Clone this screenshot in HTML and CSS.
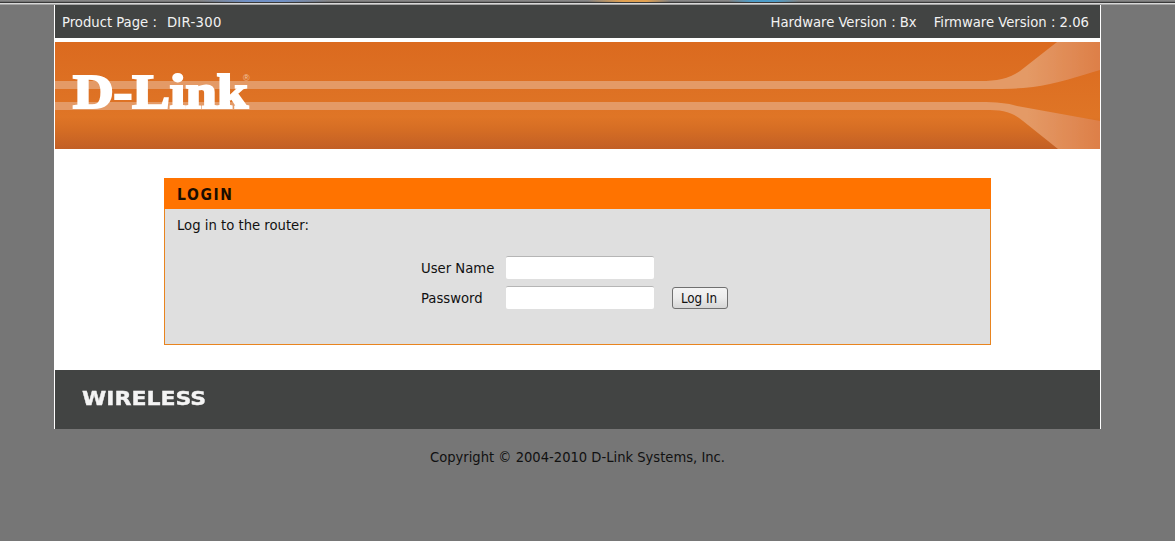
FILE: index.html
```html
<!DOCTYPE html>
<html lang="en">
<head>
<meta charset="utf-8">
<title>D-LINK SYSTEMS, INC. | WIRELESS ROUTER | LOGIN</title>
<link rel="stylesheet" href="styles.css">
</head>
<body>
<div class="strip"></div>
<div class="page">
  <header class="topbar">
    <span class="product"><span>Product Page :</span><span class="model">DIR-300</span></span>
    <span class="versions"><span>Hardware Version : Bx</span><span>Firmware Version : 2.06</span></span>
  </header>
  <div class="banner">
    <svg class="banner-art" width="1045" height="107" viewBox="0 0 1045 107" aria-hidden="true">
      <defs>
        <linearGradient id="orange" x1="0" y1="0" x2="0" y2="1">
          <stop offset="0" stop-color="#db6a1f"/>
          <stop offset="0.7" stop-color="#df7526"/>
          <stop offset="0.82" stop-color="#d56d24"/>
          <stop offset="1" stop-color="#c25f25"/>
        </linearGradient>
        <linearGradient id="wing" x1="0" y1="0" x2="1045" y2="0" gradientUnits="userSpaceOnUse">
          <stop offset="0" stop-color="#e49a66"/>
          <stop offset="0.93" stop-color="#e49a66"/>
          <stop offset="1" stop-color="#dd7f48"/>
        </linearGradient>
        <filter id="soft" x="-1%" y="-5%" width="102%" height="110%">
          <feGaussianBlur stdDeviation="0.7"/>
        </filter>
      </defs>
      <rect width="1045" height="107" fill="url(#orange)"/>
      <g filter="url(#soft)">
        <path d="M0 39H925C942 39 953 37 965 29L1002 0H1045V28C1025 34 1000 42 978 45C962 47 945 47 925 47H0Z" fill="url(#wing)"/>
        <path d="M0 60H925C942 60 952 61 962 64L1045 79V107H1003L968 79C958 71 950 68 935 68H0Z" fill="url(#wing)"/>
      </g>
      <text class="logo-text" x="18" y="66" textLength="175" lengthAdjust="spacingAndGlyphs">D-Link</text>
      <text class="logo-mark" x="188" y="39">®</text>
    </svg>
  </div>
  <main class="content">
    <section class="card">
      <h1 class="card-title">LOGIN</h1>
      <div class="card-body">
        <p class="intro">Log in to the router:</p>
        <form class="login-form">
          <label class="field-label" for="user">User Name</label>
          <input class="field" id="user" type="text">
          <span></span>
          <label class="field-label" for="pass">Password</label>
          <input class="field" id="pass" type="password">
          <button class="submit" type="button">Log In</button>
        </form>
      </div>
    </section>
  </main>
  <footer class="footer"><span class="wireless">WIRELESS</span></footer>
</div>
<p class="copyright">Copyright © 2004-2010 D-Link Systems, Inc.</p>
</body>
</html>
```
FILE: styles.css
```css
* { box-sizing: border-box; }
html, body { margin: 0; height: 100%; }
body {
  background: #767676;
  color: #111;
  font-family: "DejaVu Sans Condensed", "DejaVu Sans", sans-serif;
  font-stretch: condensed;
  font-size: 14.7px;
  overflow: hidden;
}
.strip {
  height: 5px;
  background:
    linear-gradient(90deg, transparent 17%, #6f8fc4 21%, #6f8fc4 24%, transparent 28%, transparent 50%, #e0a050 53%, #e0a050 55%, transparent 57%, transparent 62%, #4c9cc8 64%, #4c9cc8 66%, transparent 68%) 0 0 / 100% 2px no-repeat,
    linear-gradient(#8f8f8f 0, #6a6a6a 40%, #3a3a3a 50%, #d8d8d8 70%, #8a8a8a 100%);
}
.page {
  width: 1047px;
  margin-left: 54px;
  background: #fff;
  border-left: 1px solid #fff;
  border-right: 1px solid #fff;
}
.topbar {
  height: 33px;
  background: #424443;
  color: #f2f2f2;
  display: flex;
  justify-content: space-between;
  align-items: center;
  padding: 0 11px 0 7px;
}
.product { display: flex; gap: 10px; }
.model { letter-spacing: 0.3px; }
.versions { display: flex; gap: 17px; }
.banner { margin-top: 4px; height: 107px; }
.banner-art { display: block; }
.logo-text {
  font-family: "Liberation Serif", serif;
  font-weight: 700;
  font-size: 48px;
  fill: #fff;
  stroke: #fff;
  stroke-width: 2.2px;
}
.logo-mark {
  font-family: "Liberation Sans", sans-serif;
  font-size: 9px;
  fill: #f1c6a6;
}
.content { height: 221px; padding: 29px 109px 0; }
.card {
  height: 167px;
  background: #dfdfdf;
  border: 1px solid #e8841f;
  border-top: 0;
}
.card-title {
  margin: 0;
  height: 31px;
  margin-inline: -1px;
  padding: 0 13px;
  background: #ff7300;
  color: #1a0d00;
  font-size: 15.5px;
  font-weight: 700;
  letter-spacing: 1.6px;
  line-height: 34px;
}
.card-body { padding: 7px 12px 0; }
.intro { margin: 0; line-height: 18px; }
.login-form {
  display: grid;
  grid-template-columns: 85px 148px auto;
  grid-auto-rows: 23px;
  row-gap: 7px;
  margin: 22px 0 0 244px;
  align-items: center;
}
.field-label { line-height: 25px; }
.field {
  width: 148px;
  height: 23px;
  background: #fff;
  border: 0;
  border-top: 1px solid #b5b5b5;
  border-radius: 2px;
  padding: 0 3px;
}
.submit {
  width: 56px;
  height: 22px;
  margin: 1px 0 0 18px;
  padding: 0 2px 0 0;
  border: 1px solid #707070;
  border-radius: 3px;
  background: linear-gradient(#f4f4f4, #ececec 50%, #d6d6d6);
  color: #111;
  font: inherit;
  font-size: 13.3px;
}
.footer {
  height: 59px;
  background: #424443;
  display: flex;
  align-items: center;
  padding: 0 0 4px 27px;
}
.wireless {
  display: inline-block;
  color: #f4f4f4;
  font-family: "DejaVu Sans", sans-serif;
  font-stretch: normal;
  font-weight: 700;
  font-size: 20px;
  -webkit-text-stroke: 0.4px #f4f4f4;
  transform: scaleX(1.1);
  transform-origin: left center;
}
.copyright {
  width: 1047px;
  margin: 19px 0 0 54px;
  text-align: center;
  color: #111;
  font-size: 14.6px;
}
```
